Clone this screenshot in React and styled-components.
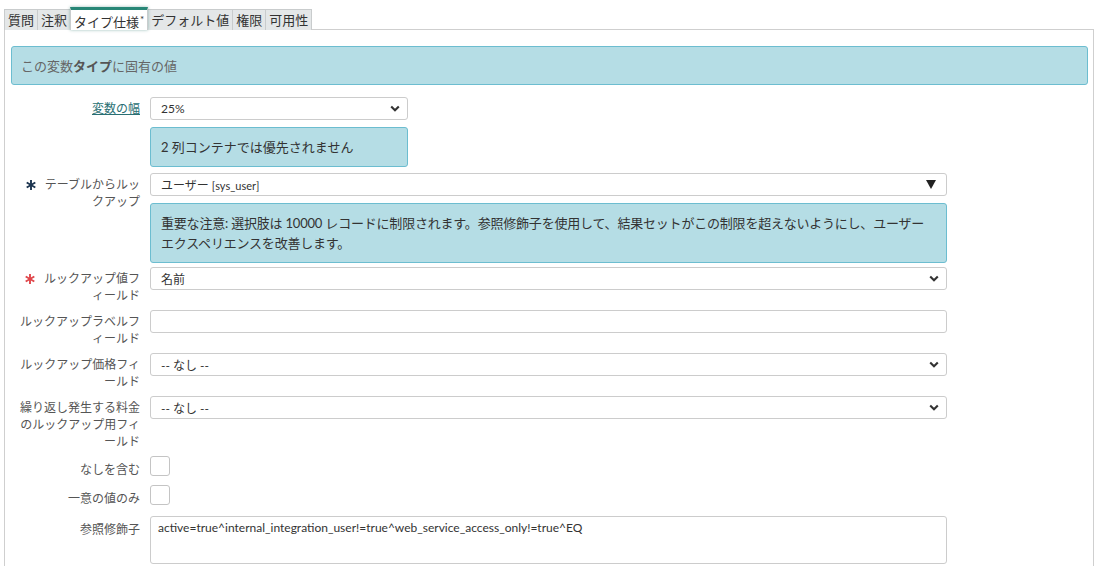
import React from "react";
import styled, { createGlobalStyle } from "styled-components";

const Global = createGlobalStyle`
  html, body { margin: 0; padding: 0; background: #fff; }
  body { font-family: "Lato", "Noto Sans CJK JP", sans-serif; color: #333; }
`;

const Page = styled.div`
  width: 1090px;
  padding: 7px 0 0 4px;
`;

const TabBar = styled.div`
  display: flex;
  align-items: flex-end;
  height: 23px;
`;

const Tab = styled.div`
  box-sizing: border-box;
  height: ${(p) => (p.$active ? "23px" : "21px")};
  padding: 0 3px;
  font-size: 13px;
  line-height: ${(p) => (p.$active ? "19px" : "20px")};
  color: #333;
  background: ${(p) => (p.$active ? "#fff" : "#e4e7e8")};
  border: 1px solid #c9cccd;
  border-top: ${(p) => (p.$active ? "3px solid #278676" : "1px solid #c9cccd")};
  border-bottom: none;
  margin-right: -1px;
  position: relative;
  z-index: ${(p) => (p.$active ? 1 : 0)};
  box-shadow: ${(p) => (p.$active ? "0 0 3px rgba(30,110,100,0.45)" : "none")};
  white-space: nowrap;
  sup { font-size: 10px; vertical-align: 4px; margin-left: 1px; }
`;

const TabFill = styled.div`
  flex: 1;
  border-bottom: 1px solid #cfcfcf;
  height: 22px;
  margin-left: 1px;
`;

const Panel = styled.div`
  border-left: 1px solid #cfcfcf;
  border-right: 1px solid #cfcfcf;
  padding: 16px 5px 0 6px;
  min-height: 545px;
  box-sizing: border-box;
`;

const Banner = styled.div`
  box-sizing: border-box;
  height: 39px;
  background: #b5dde5;
  border: 1px solid #6cbdd0;
  border-radius: 3px;
  padding: 0 9px;
  display: flex;
  align-items: center;
  font-size: 13px;
  color: #666;
  margin-bottom: 12px;
  b { font-weight: 700; color: #555; }
`;

const Form = styled.div`
  display: flex;
  flex-direction: column;
  gap: 6px;
  padding-left: 7px;
`;

const Row = styled.div`
  display: flex;
  align-items: flex-start;
  gap: 10px;
  min-height: 23px;
  margin-bottom: ${(p) => p.$mb || 0}px;
`;

const Label = styled.div`
  width: 122px;
  flex: none;
  text-align: right;
  font-size: 12px;
  line-height: 17px;
  padding-top: ${(p) => p.$pt || 3}px;
  color: #555;
  line-break: normal;
  word-break: normal;
`;

const LinkLabel = styled.span`
  color: #2a6f73;
  text-decoration: underline;
`;

const Required = styled.span`
  display: inline-block;
  width: 10px;
  height: 10px;
  margin-right: 9px;
  vertical-align: -1px;
  svg { display: block; }
`;

const FieldCol = styled.div`
  display: flex;
  flex-direction: column;
  gap: 7px;
`;

const SelectBox = styled.div`
  box-sizing: border-box;
  width: ${(p) => p.$w}px;
  height: 23px;
  border: 1px solid #cccccc;
  border-radius: 3px;
  background: #fff;
  display: flex;
  align-items: center;
  justify-content: space-between;
  padding: 0 ${(p) => (p.$triangle ? "10px" : "7px")} 0 10px;
  font-size: 12px;
  color: #333;
  small { font-size: 11px; }
`;

const TextInput = styled.div`
  box-sizing: border-box;
  width: ${(p) => p.$w}px;
  height: 23px;
  border: 1px solid #cccccc;
  border-radius: 3px;
  background: #fff;
`;

const Info = styled.div`
  box-sizing: border-box;
  width: ${(p) => p.$w}px;
  background: #b5dde5;
  border: 1px solid #6cbdd0;
  border-radius: 3px;
  padding: 9px 6px 9px 10px;
  font-size: 13px;
  line-height: 20px;
  color: #333;
  letter-spacing: ${(p) => (p.$tight ? "-0.2px" : "0")};
`;

const InfoLine = styled.div`
  white-space: nowrap;
`;

const Checkbox = styled.div`
  box-sizing: border-box;
  width: 20px;
  height: 20px;
  border: 1px solid #c4c4c4;
  border-radius: 3px;
  background: #fff;
`;

const TextArea = styled.div`
  box-sizing: border-box;
  width: 797px;
  height: 48px;
  border: 1px solid #cccccc;
  border-radius: 3px;
  padding: 3px 7px;
  font-size: 12px;
  line-height: 16px;
  color: #333;
`;

const Chevron = () => (
  <svg width="10" height="7" viewBox="0 0 10 7">
    <path d="M1.2 1.4 L5 5.2 L8.8 1.4" fill="none" stroke="#333" strokeWidth="2.1" />
  </svg>
);

const Triangle = () => (
  <svg width="10" height="9" viewBox="0 0 10 9">
    <path d="M0 0 H10 L5 9 Z" fill="#222" />
  </svg>
);

const Star = ({ color }) => (
  <Required>
    <svg width="10" height="10" viewBox="0 0 10 10">
      <g stroke={color} strokeWidth="1.9" strokeLinecap="butt">
        <line x1="5" y1="0" x2="5" y2="10" />
        <line x1="0.7" y1="2.5" x2="9.3" y2="7.5" />
        <line x1="0.7" y1="7.5" x2="9.3" y2="2.5" />
      </g>
    </svg>
  </Required>
);

const Select = ({ w, children, triangle }) => (
  <SelectBox $w={w} $triangle={triangle}>
    <span>{children}</span>
    {triangle ? <Triangle /> : <Chevron />}
  </SelectBox>
);

const tabs = ["質問", "注釈", "タイプ仕様", "デフォルト値", "権限", "可用性"];

export default function App() {
  return (
    <>
      <Global />
      <Page>
        <TabBar>
          {tabs.map((t) => (
            <Tab key={t} $active={t === "タイプ仕様"}>
              {t}
              {t === "タイプ仕様" && <sup>*</sup>}
            </Tab>
          ))}
          <TabFill />
        </TabBar>
        <Panel>
          <Banner>
            <span>
              この変数<b>タイプ</b>に固有の値
            </span>
          </Banner>
          <Form>
            <Row>
              <Label>
                <LinkLabel>変数の幅</LinkLabel>
              </Label>
              <FieldCol>
                <Select w={258}>25%</Select>
                <Info $w={258}>2 列コンテナでは優先されません</Info>
              </FieldCol>
            </Row>
            <Row $mb={-2}>
              <Label>
                <Star color="#1d3550" />
                テーブルからルックアップ
              </Label>
              <FieldCol>
                <Select w={797} triangle>
                  ユーザー <small>[sys_user]</small>
                </Select>
                <Info $w={797} $tight>
                  <InfoLine>
                    重要な注意: 選択肢は 10000 レコードに制限されます。参照修飾子を使用して、結果セットがこの制限を超えないようにし、ユーザー
                  </InfoLine>
                  <InfoLine>エクスペリエンスを改善します。</InfoLine>
                </Info>
              </FieldCol>
            </Row>
            <Row>
              <Label>
                <Star color="#e0474c" />
                ルックアップ値フィールド
              </Label>
              <Select w={797}>名前</Select>
            </Row>
            <Row>
              <Label>ルックアップラベルフィールド</Label>
              <TextInput $w={797} />
            </Row>
            <Row>
              <Label>ルックアップ価格フィールド</Label>
              <Select w={797}>-- なし --</Select>
            </Row>
            <Row>
              <Label>繰り返し発生する料金のルックアップ用フィールド</Label>
              <Select w={797}>-- なし --</Select>
            </Row>
            <Row>
              <Label $pt={5}>なしを含む</Label>
              <Checkbox />
            </Row>
            <Row $mb={2}>
              <Label $pt={5}>一意の値のみ</Label>
              <Checkbox />
            </Row>
            <Row>
              <Label $pt={5}>参照修飾子</Label>
              <TextArea>
                active=true^internal_integration_user!=true^web_service_access_only!=true^EQ
              </TextArea>
            </Row>
          </Form>
        </Panel>
      </Page>
    </>
  );
}
